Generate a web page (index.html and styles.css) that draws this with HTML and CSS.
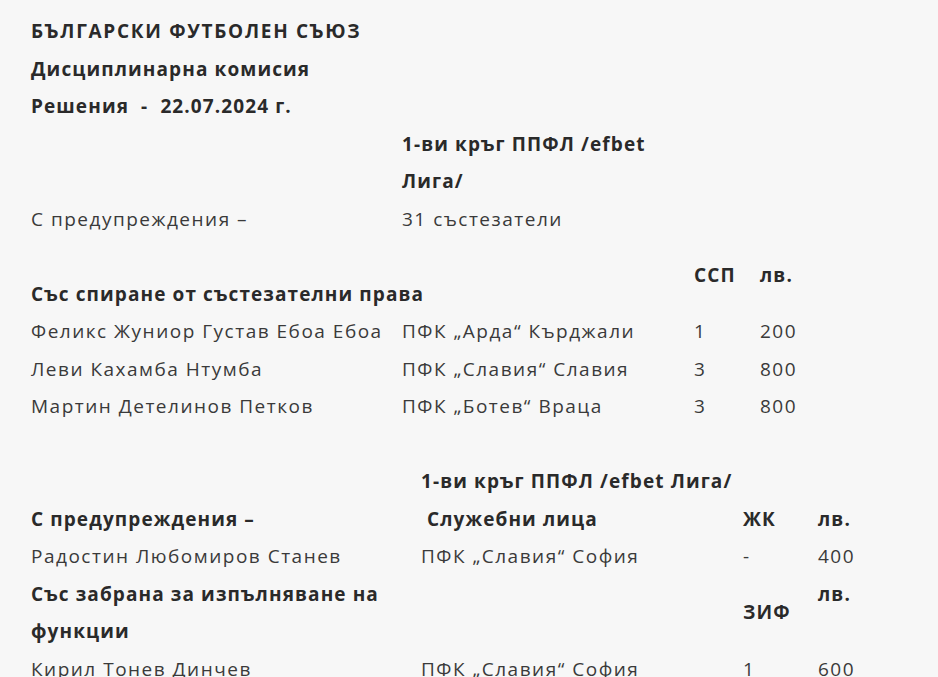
FILE: index.html
```html
<!DOCTYPE html>
<html lang="bg">
<head>
<meta charset="utf-8">
<title>Решения</title>
<link rel="stylesheet" href="styles.css">
</head>
<body>
<main class="doc">
  <p class="line b title">БЪЛГАРСКИ ФУТБОЛЕН СЪЮЗ</p>
  <p class="line b">Дисциплинарна комисия</p>
  <p class="line b">Решения&nbsp; -&nbsp; 22.07.2024 г.</p>

  <table class="t t1">
    <colgroup><col class="c1"><col class="c2"><col class="c3"><col class="c4"></colgroup>
    <tr>
      <td></td>
      <td class="b">1-ви кръг ППФЛ /efbet Лига/</td>
      <td></td><td></td>
    </tr>
    <tr>
      <td>С предупреждения –</td>
      <td>31 състезатели</td>
      <td></td><td></td>
    </tr>
    <tr class="head">
      <td class="b bottom" colspan="2">&nbsp;<br>Със спиране от състезателни права</td>
      <td class="b">ССП</td>
      <td class="b">лв.</td>
    </tr>
    <tr><td>Феликс Жуниор Густав Ебоа Ебоа</td><td>ПФК „Арда“ Кърджали</td><td>1</td><td>200</td></tr>
    <tr><td>Леви Кахамба Нтумба</td><td>ПФК „Славия“ Славия</td><td>3</td><td>800</td></tr>
    <tr><td>Мартин Детелинов Петков</td><td>ПФК „Ботев“ Враца</td><td>3</td><td>800</td></tr>
  </table>

  <p class="line">&nbsp;</p>

  <table class="t t2">
    <colgroup><col class="d1"><col class="d2"><col class="d3"><col class="d4"></colgroup>
    <tr><td></td><td class="b">1-ви кръг ППФЛ /efbet Лига/</td><td></td><td></td></tr>
    <tr><td class="b">С предупреждения –</td><td class="b">&nbsp;Служебни лица</td><td class="b">ЖК</td><td class="b">лв.</td></tr>
    <tr><td>Радостин Любомиров Станев</td><td>ПФК „Славия“ София</td><td>-</td><td>400</td></tr>
    <tr class="head2">
      <td class="b">Със забрана за изпълняване на функции</td>
      <td></td>
      <td class="b">ЗИФ</td>
      <td class="b top">лв.</td>
    </tr>
    <tr><td>Кирил Тонев Динчев</td><td>ПФК „Славия“ София</td><td>1</td><td>600</td></tr>
  </table>
</main>
</body>
</html>
```
FILE: styles.css
```css
html, body {
  margin: 0;
  padding: 0;
  background: #f7f7f7;
}
.doc {
  padding: 13px 0 0 31px;
  font-family: "Open Sans", "Noto Sans", sans-serif;
  font-size: 19px;
  line-height: 37.5px;
  letter-spacing: 1.5px;
  color: #3a3a3a;
}
.line {
  margin: 0;
}
.b {
  font-weight: 700;
  letter-spacing: 1.1px;
  color: #2a2a2a;
}
.b.title {
  letter-spacing: 1.7px;
}
.t {
  border-collapse: collapse;
  table-layout: fixed;
}
.t td {
  padding: 0;
  vertical-align: middle;
  white-space: normal;
}
.t1 { width: 820px; }
.c1 { width: 371px; }
.c2 { width: 292px; }
.c3 { width: 66px; }
.c4 { width: 91px; }
.t2 { width: 880px; }
.d1 { width: 390px; }
.d2 { width: 322px; }
.d3 { width: 75px; }
.d4 { width: 93px; }
.t td.bottom { vertical-align: bottom; }
.t td.top { vertical-align: top; }
```
